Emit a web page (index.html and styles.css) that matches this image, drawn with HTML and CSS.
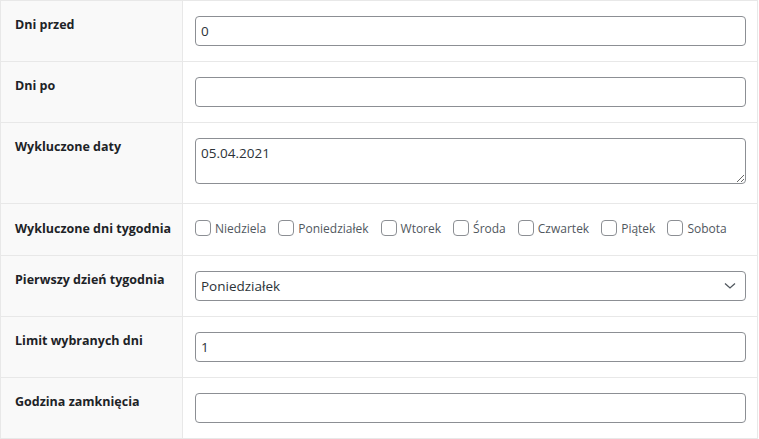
FILE: index.html
```html
<!DOCTYPE html>
<html lang="pl">
<head>
<meta charset="utf-8">
<link rel="stylesheet" href="styles.css">
</head>
<body>
<table class="form-table">
  <colgroup>
    <col class="col-label">
    <col class="col-field">
  </colgroup>
  <tbody>
    <tr>
      <th>Dni przed</th>
      <td><input class="field" type="text" value="0"></td>
    </tr>
    <tr>
      <th>Dni po</th>
      <td><input class="field" type="text" value=""></td>
    </tr>
    <tr class="row-textarea">
      <th>Wykluczone daty</th>
      <td><textarea class="field area">05.04.2021</textarea></td>
    </tr>
    <tr class="row-checks">
      <th>Wykluczone dni tygodnia</th>
      <td>
        <div class="checks">
          <label class="check"><span class="box"></span>Niedziela</label>
          <label class="check"><span class="box"></span>Poniedziałek</label>
          <label class="check"><span class="box"></span>Wtorek</label>
          <label class="check"><span class="box"></span>Środa</label>
          <label class="check"><span class="box"></span>Czwartek</label>
          <label class="check"><span class="box"></span>Piątek</label>
          <label class="check"><span class="box"></span>Sobota</label>
        </div>
      </td>
    </tr>
    <tr>
      <th>Pierwszy dzień tygodnia</th>
      <td>
        <div class="field select">
          <span>Poniedziałek</span>
          <svg class="chev" width="12" height="8" viewBox="0 0 12 8"><path d="M1 1.5 L6 6 L11 1.5" fill="none" stroke="#50575e" stroke-width="1.3"/></svg>
        </div>
      </td>
    </tr>
    <tr>
      <th>Limit wybranych dni</th>
      <td><input class="field" type="text" value="1"></td>
    </tr>
    <tr>
      <th>Godzina zamknięcia</th>
      <td><input class="field" type="text" value=""></td>
    </tr>
  </tbody>
</table>
</body>
</html>
```
FILE: styles.css
```css
html, body {
  margin: 0;
  padding: 0;
  background: #fff;
}
body {
  font-family: "Open Sans", "Noto Sans", sans-serif;
  color: #2c3338;
}
.form-table {
  border-collapse: collapse;
  table-layout: fixed;
  width: 758px;
  border: 1px solid #e8e8e8;
}
.col-label {
  width: 182px;
}
.form-table tr {
  height: 61px;
}
.form-table th {
  background: #f9f9f9;
  text-align: left;
  vertical-align: top;
  padding: 15px 6px 0 14px;
  font-size: 12.5px;
  font-weight: 700;
  color: #1d2327;
  line-height: 18px;
  border: 1px solid #e8e8e8;
  white-space: nowrap;
  overflow: hidden;
}
.form-table td {
  vertical-align: top;
  padding: 15px 11px 0 12px;
  border: 1px solid #e8e8e8;
}
.field {
  display: block;
  box-sizing: border-box;
  width: 551px;
  height: 30px;
  margin: 0;
  padding: 0 5px;
  border: 1px solid #8c8f94;
  border-radius: 4px;
  background: #fff;
  font-family: "Open Sans", "Noto Sans", sans-serif;
  font-size: 13.5px;
  color: #2c3338;
  outline: none;
}
.form-table .row-textarea {
  height: 81px;
}
.area {
  height: 46px;
  padding: 5px 5px;
  line-height: 18px;
  resize: vertical;
}
.form-table .row-checks {
  height: 52px;
}
.form-table .row-checks th {
  padding-top: 16px;
}
.checks {
  display: flex;
  align-items: center;
  padding-top: 1px;
  height: 16px;
}
.check {
  display: flex;
  align-items: center;
  font-size: 12px;
  color: #50575e;
  margin-right: 12px;
  white-space: nowrap;
}
.check:last-child {
  margin-right: 0;
}
.box {
  flex: none;
  width: 16px;
  height: 16px;
  box-sizing: border-box;
  border: 1px solid #8c8f94;
  border-radius: 4px;
  background: #fff;
  margin-right: 4px;
}
.select {
  display: flex;
  align-items: center;
  justify-content: space-between;
  padding: 0 9px 0 5px;
}
.chev {
  display: block;
}
```
